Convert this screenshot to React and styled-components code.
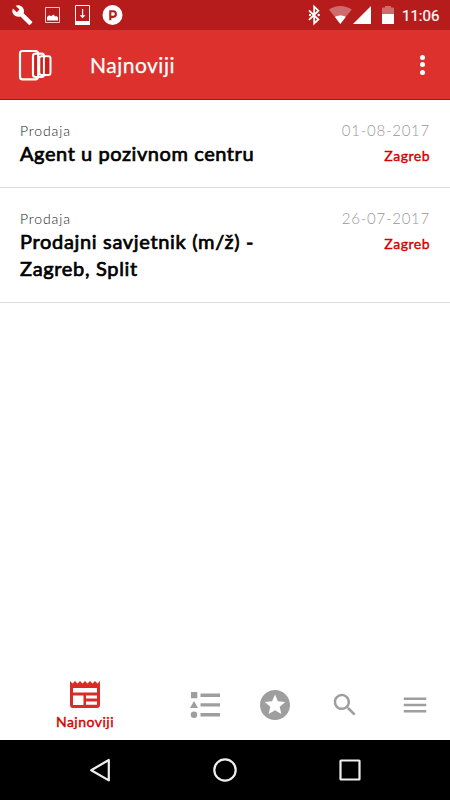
import React from "react";
import styled, { createGlobalStyle } from "styled-components";

const jobs = [
  {
    id: 1,
    category: "Prodaja",
    title: ["Agent u pozivnom centru"],
    spacing: "0.57px",
    date: "01-08-2017",
    city: "Zagreb",
  },
  {
    id: 2,
    category: "Prodaja",
    title: ["Prodajni savjetnik (m/ž) -", "Zagreb, Split"],
    spacing: "0.67px",
    date: "26-07-2017",
    city: "Zagreb",
  },
];

const StatusBar = () => (
  <Status>
    <StatusIcons>
      <svg width="150" height="30" viewBox="0 0 150 30" fill="#fff">
        <path d="M32 21.6l-8.4-8.4c.8-2.1.4-4.6-1.3-6.3-1.8-1.8-4.5-2.2-6.7-1.2l3.9 3.9-2.7 2.7-3.9-3.9c-1.1 2.2-.6 4.9 1.2 6.7 1.7 1.7 4.2 2.1 6.3 1.3l8.4 8.4c.4.4 1 .4 1.3 0l2-2c.4-.4.4-.9-.1-1.2z" />
        <path d="M45.5 7.5h14v15h-14z" fill="none" stroke="#f1c8c8" />
        <path d="M47 20.5V17l2.2-1.8 2 1 2-1.6 2.3 2 1-.7 1.5 1.6v3z" />
        <path d="M75.5 5.5h14v19h-14z" fill="none" stroke="#fff" />
        <path d="M75 21h15v4H75zM82 9h1.2v6.2h2.3l-2.9 3-2.9-3H82z" />
        <circle cx="112.5" cy="15" r="10" />
        <path
          d="M110.3 20.3v-9h2.8a2.8 2.8 0 0 1 0 5.6h-2.8"
          fill="none"
          stroke="#b71c1c"
          strokeWidth="2.1"
        />
      </svg>
    </StatusIcons>
    <StatusIcons>
      <svg width="100" height="30" viewBox="300 0 100 30" fill="#fff">
        <path
          d="M309 10.3l9.4 9.2-4.2 4V6.7l4.2 4-9.4 9.2"
          fill="none"
          stroke="#fff"
          strokeWidth="1.8"
        />
        <circle cx="310" cy="15" r="1.2" />
        <circle cx="318.7" cy="15" r="1.2" />
        <path d="M340.3 24L329 9.5c6.5-4.8 16.2-4.8 22.7 0z" opacity=".35" />
        <path d="M340.3 24l-5.3-7c3-2 7.7-2 10.7 0z" />
        <path d="M371 6v18h-18z" />
        <path d="M382 7.5h3V6h6v1.5h3V14h-12z" opacity=".35" />
        <path d="M382 14h12v10h-12z" />
      </svg>
      <Clock>11:06</Clock>
    </StatusIcons>
  </Status>
);

const Header = () => (
  <AppBar>
    <svg width="34" height="32" viewBox="18 49 34 32" fill="none" stroke="#fff">
      <rect x="20" y="51" width="18" height="28.3" rx="2.5" strokeWidth="2.2" />
      <rect x="33" y="53.6" width="11" height="23.4" rx="2.5" fill="#cb1f1c" strokeWidth="2.2" />
      <path d="M38.2 54v22.5" strokeWidth="2.2" />
      <rect x="39.3" y="56.2" width="11.2" height="18.8" rx="2.2" fill="#cb1f1c" strokeWidth="2" />
      <path d="M43.9 56v19" strokeWidth="2" />
    </svg>
    <PageTitle>Najnoviji</PageTitle>
    <MoreButton aria-label="Više">
      <Dot />
      <Dot />
      <Dot />
    </MoreButton>
  </AppBar>
);

const JobRow = ({ job }) => (
  <Row>
    <RowMain>
      <Category>{job.category}</Category>
      {job.title.map((line) => (
        <TitleLine key={line} $spacing={job.spacing}>
          {line}
        </TitleLine>
      ))}
    </RowMain>
    <RowSide>
      <PostedAt>{job.date}</PostedAt>
      <City>{job.city}</City>
    </RowSide>
  </Row>
);

const Tabs = () => (
  <TabBar>
    <Tab $active>
      <svg width="30" height="28" viewBox="0 0 30 28">
        <path
          d="M0 1l2.5 2.5L5 1l2.5 2.5L10 1l2.5 2.5L15 1l2.5 2.5L20 1l2.5 2.5L25 1l2.5 2.5L30 1v24a3 3 0 0 1-3 3H3a3 3 0 0 1-3-3z"
          fill="#db2b27"
        />
        <path d="M3 8h24v4.5H3zM3 15.5h10.5V25H3zM16 15.5h11v3H16zM16 21.5h11v3.3H16z" fill="#fff" />
      </svg>
      <TabLabel>Najnoviji</TabLabel>
    </Tab>
    <Tab>
      <svg width="30" height="28" viewBox="190 691 30 28" fill="#9e9e9e">
        <path d="M191 692h6.3v6.3H191zM194 701l4 7h-8z" />
        <circle cx="194" cy="714.7" r="3.2" />
        <path d="M200.5 693.6H220v3.4h-19.5zM200.5 703.2H220v3.4h-19.5zM200.5 713H220v3.4h-19.5z" />
      </svg>
    </Tab>
    <Tab>
      <svg width="30" height="30" viewBox="2 2 20 20" fill="#9e9e9e">
        <path d="M11.99 2C6.47 2 2 6.48 2 12s4.47 10 9.99 10C17.52 22 22 17.52 22 12S17.52 2 11.99 2zm4.24 16L12 15.45 7.77 18l1.12-4.81-3.73-3.23 4.92-.42L12 5l1.92 4.53 4.92.42-3.73 3.23L16.23 18z" />
      </svg>
    </Tab>
    <Tab>
      <svg width="30" height="30" viewBox="0 0 24 24" fill="#9e9e9e">
        <path d="M15.5 14h-.79l-.28-.27C15.41 12.59 16 11.11 16 9.5 16 5.91 13.09 3 9.5 3S3 5.91 3 9.5 5.91 16 9.5 16c1.61 0 3.09-.59 4.23-1.57l.27.28v.79l5 4.99L20.49 19l-4.99-5zm-6 0C7.01 14 5 11.99 5 9.5S7.01 5 9.5 5 14 7.01 14 9.5 11.99 14 9.5 14z" />
      </svg>
    </Tab>
    <Tab>
      <svg width="30" height="30" viewBox="0 0 24 24" fill="#9e9e9e">
        <path d="M3 18h18v-2H3v2zm0-5h18v-2H3v2zm0-7v2h18V6H3z" />
      </svg>
    </Tab>
  </TabBar>
);

const SystemNav = () => (
  <NavBar>
    <svg width="26" height="26" viewBox="0 0 26 26">
      <path d="M4.2 13.2L21.8 3v20.4z" />
    </svg>
    <svg width="26" height="26" viewBox="0 0 26 26">
      <circle cx="13" cy="13" r="10.7" />
    </svg>
    <svg width="26" height="26" viewBox="0 0 26 26">
      <rect x="3.5" y="3.5" width="19" height="19" rx=".5" />
    </svg>
  </NavBar>
);

const App = () => (
  <Screen>
    <GlobalStyle />
    <StatusBar />
    <Header />
    <JobList>
      {jobs.map((job) => (
        <JobRow key={job.id} job={job} />
      ))}
    </JobList>
    <Tabs />
    <SystemNav />
  </Screen>
);

export default App;

const GlobalStyle = createGlobalStyle`
  * {
    box-sizing: border-box;
  }

  body {
    margin: 0;
    background: #fff;
    font-family: Lato, "Open Sans", sans-serif;
  }

  svg {
    display: block;
    flex: none;
  }
`;

const Screen = styled.div`
  display: flex;
  flex-direction: column;
  width: 450px;
  height: 800px;
  overflow: hidden;
`;

const Status = styled.div`
  display: flex;
  justify-content: space-between;
  height: 30px;
  padding-right: 10px;
  background: #b71c1c;
`;

const StatusIcons = styled.div`
  display: flex;
  align-items: center;
`;

const Clock = styled.span`
  width: 40px;
  margin-left: 2px;
  margin-right: -2px;
  padding-top: 1px;
  color: #fff;
  font: 400 15px/30px Roboto, sans-serif;
  -webkit-text-stroke: 0.2px currentColor;
  white-space: nowrap;
`;

const AppBar = styled.header`
  display: flex;
  align-items: center;
  height: 70px;
  padding: 0 15px 0 18px;
  background: #dc312c;
  border-bottom: 1px solid #d50000;
`;

const PageTitle = styled.h1`
  flex: 1;
  margin: 0 0 0 38px;
  color: #fff;
  font-size: 21px;
  font-weight: 400;
  line-height: 30px;
  letter-spacing: 0.5px;
  -webkit-text-stroke: 0.25px currentColor;
`;

const MoreButton = styled.button`
  display: flex;
  flex-direction: column;
  align-items: center;
  gap: 2.5px;
  width: 25px;
  padding: 0;
  border: 0;
  background: none;
`;

const Dot = styled.span`
  width: 5px;
  height: 5px;
  border-radius: 50%;
  background: #fff;
`;

const JobList = styled.main`
  flex: 1;
`;

const Row = styled.article`
  display: flex;
  justify-content: space-between;
  padding: 20px 20px 20.5px;
  border-bottom: 1px solid #dcdcdc;
`;

const RowMain = styled.div`
  white-space: nowrap;
`;

const Category = styled.div`
  color: #222;
  font-size: 14px;
  font-weight: 300;
  line-height: 21px;
  margin-bottom: -1px;
  letter-spacing: 0.9px;
`;

const TitleLine = styled.div`
  color: #000;
  font-size: 20px;
  font-weight: 400;
  line-height: 26.5px;
  letter-spacing: ${({ $spacing }) => $spacing};
  -webkit-text-stroke: 0.7px currentColor;
`;

const RowSide = styled.div`
  display: flex;
  flex-direction: column;
  align-items: flex-end;
`;

const PostedAt = styled.time`
  color: #999;
  font-size: 15px;
  font-weight: 300;
  line-height: 21px;
  letter-spacing: 0.75px;
`;

const City = styled.div`
  color: #d50000;
  font-size: 14px;
  font-weight: 400;
  line-height: 20px;
  margin-top: 5px;
  letter-spacing: 0.5px;
  -webkit-text-stroke: 0.4px currentColor;
`;

const TabBar = styled.nav`
  display: flex;
  height: 70px;
`;

const Tab = styled.div`
  display: flex;
  flex-direction: column;
  align-items: center;
  justify-content: center;
  width: ${({ $active }) => ($active ? "170px" : "70px")};
`;

const TabLabel = styled.span`
  color: #d50000;
  font-size: 14px;
  font-weight: 400;
  line-height: 18px;
  margin-top: 5px;
  letter-spacing: 0.5px;
  -webkit-text-stroke: 0.4px currentColor;
`;

const NavBar = styled.div`
  display: flex;
  justify-content: center;
  align-items: center;
  gap: 99px;
  height: 60px;
  background: #000;

  svg {
    fill: none;
    stroke: #eee;
    stroke-width: 2.2;
    stroke-linejoin: round;
  }
`;
